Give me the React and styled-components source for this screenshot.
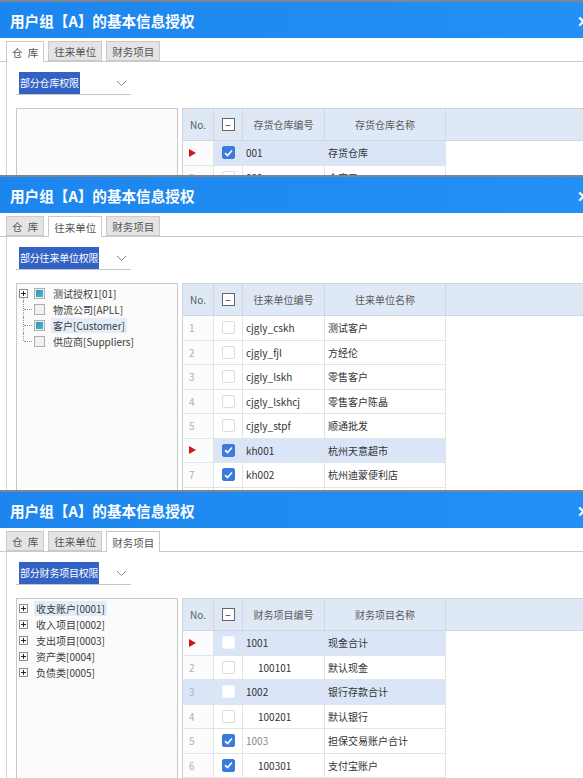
import styled, { createGlobalStyle } from "styled-components";

const GlobalStyle = createGlobalStyle`
    html, body {
        margin: 0;
        padding: 0;
        background: #ffffff;
        overflow: hidden;
    }
    body {
        font-family: "Noto Sans CJK SC", "Noto Sans", sans-serif;
        color: #333;
    }
`

const TABS = ["仓\u2002库", "往来单位", "财务项目"];

const PANELS = [
    {
        height: 175,
        tab: 0,
        filter: "部分仓库权限",
        tree: [],
        headers: ["存货仓库编号", "存货仓库名称"],
        rows: [
            { marker: true, check: "on", code: "001", name: "存货仓库", tint: true },
            { no: "2", check: "off", code: "002", name: "仓库二" },
        ],
    },
    {
        height: 315,
        tab: 1,
        filter: "部分往来单位权限",
        tree: [
            { label: "测试授权1[01]", expand: true, box: "part" },
            { label: "物流公司[APLL]", box: "empty" },
            { label: "客户[Customer]", box: "part", picked: true },
            { label: "供应商[Suppliers]", box: "empty", last: true },
        ],
        headers: ["往来单位编号", "往来单位名称"],
        rows: [
            { no: "1", check: "off", code: "cjgly_cskh", name: "测试客户" },
            { no: "2", check: "off", code: "cjgly_fjl", name: "方经伦" },
            { no: "3", check: "off", code: "cjgly_lskh", name: "零售客户" },
            { no: "4", check: "off", code: "cjgly_lskhcj", name: "零售客户陈晶" },
            { no: "5", check: "off", code: "cjgly_stpf", name: "顺通批发" },
            { marker: true, check: "on", code: "kh001", name: "杭州天意超市", tint: true },
            { no: "7", check: "on", code: "kh002", name: "杭州迪蒙便利店" },
            { no: "", check: "off", code: "", name: "" },
        ],
    },
    {
        height: 288,
        tab: 2,
        filter: "部分财务项目权限",
        tree: [
            { label: "收支账户[0001]", expand: true, picked: true },
            { label: "收入项目[0002]", expand: true },
            { label: "支出项目[0003]", expand: true },
            { label: "资产类[0004]", expand: true },
            { label: "负债类[0005]", expand: true },
        ],
        headers: ["财务项目编号", "财务项目名称"],
        rows: [
            { marker: true, check: "blank", code: "1001", name: "现金合计", tint: true },
            { no: "2", check: "off", code: "100101", name: "默认现金", indent: true },
            { no: "3", check: "blank", code: "1002", name: "银行存款合计", tint: true, tintNo: true },
            { no: "4", check: "off", code: "100201", name: "默认银行", indent: true },
            { no: "5", check: "on", code: "1003", name: "担保交易账户合计", dim: true },
            { no: "6", check: "on", code: "100301", name: "支付宝账户", indent: true },
        ],
    },
];

const Chevron = () => (
    <svg width="11" height="7" viewBox="0 0 11 7">
        <path d="M1 1 L5.5 5.5 L10 1" fill="none" stroke="#8a8a8a" strokeWidth="1" />
    </svg>
);

const Expander = () => (
    <svg width="9" height="9" viewBox="0 0 9 9">
        <rect x="0.5" y="0.5" width="8" height="8" fill="#fff" stroke="#8c8c8c" />
        <path d="M2 4.5 H7 M4.5 2 V7" stroke="#222" strokeWidth="1" />
    </svg>
);

const Marker = () => (
    <svg width="7" height="8" viewBox="0 0 7 8">
        <polygon points="0,0 7,4 0,8" fill="#d4141c" />
    </svg>
);

const Tick = () => (
    <svg width="9" height="8" viewBox="0 0 9 8">
        <path d="M1 4.2 L3.5 6.5 L8 1.5" fill="none" stroke="#fff" strokeWidth="1.6" />
    </svg>
);

const TreeNode = ({ node, index }) => (
    <TreeRow>
        <Branch $first={index === 0} $last={node.last} $lines={Boolean(node.box)}>
            {node.expand && <Expander />}
        </Branch>
        {node.box && <TreeBoxMark $part={node.box === "part"} />}
        <TreeLabel $picked={node.picked}>{node.label}</TreeLabel>
    </TreeRow>
);

const GridRow = ({ row }) => (
    <Row>
        <NoCell $tint={row.tintNo}>{row.marker ? <Marker /> : row.no}</NoCell>
        <Cell $tint={row.tint} $center>
            <CheckBox $state={row.check}>{row.check === "on" && <Tick />}</CheckBox>
        </Cell>
        <Cell $tint={row.tint} $indent={row.indent} $dim={row.dim}>{row.code}</Cell>
        <Cell $tint={row.tint}>{row.name}</Cell>
        <Filler />
    </Row>
);

const Panel = ({ panel }) => (
    <Dialog $height={panel.height}>
        <TitleBar>
            <span>用户组【A】的基本信息授权</span>
            <Close>✕</Close>
        </TitleBar>
        <TabStrip>
            {TABS.map((t, i) => (
                <Tab key={t} $active={i === panel.tab}>{t}</Tab>
            ))}
        </TabStrip>
        <Pane>
            <Dropdown>
                <DropLabel>{panel.filter}</DropLabel>
                <Chevron />
            </Dropdown>
            <Body>
                <TreeBox>
                    {panel.tree.map((node, i) => (
                        <TreeNode key={node.label} node={node} index={i} />
                    ))}
                </TreeBox>
                <Grid>
                    <HeadRow>
                        <HeadCell>No.</HeadCell>
                        <HeadCell><HeadCheck>−</HeadCheck></HeadCell>
                        <HeadCell>{panel.headers[0]}</HeadCell>
                        <HeadCell>{panel.headers[1]}</HeadCell>
                        <HeadCell />
                    </HeadRow>
                    {panel.rows.map((row, i) => (
                        <GridRow key={i} row={row} />
                    ))}
                </Grid>
            </Body>
        </Pane>
    </Dialog>
);

const App = () => (
    <>
        <GlobalStyle />
        <Page>
            {PANELS.map((p) => (
                <Panel key={p.tab} panel={p} />
            ))}
        </Page>
    </>
);

const Page = styled.div`
    width: 583px;
    height: 778px;
    overflow: hidden;
`

const Dialog = styled.section`
    width: 592px;
    height: ${(p) => p.$height}px;
    box-sizing: border-box;
    overflow: hidden;
    border-top: 2px solid #7c8591;
    background: #fff;
`

const TitleBar = styled.div`
    height: 36px;
    display: flex;
    align-items: center;
    justify-content: space-between;
    padding: 0 0 0 10px;
    background: linear-gradient(90deg, #1d86ee 0%, #2290f4 100%);
    color: #fff;
    font-size: 14.6px;
    font-weight: 700;
`

const Close = styled.span`
    font-size: 15px;
    font-weight: 700;
    padding-right: 2px;
`

const TabStrip = styled.div`
    display: flex;
    align-items: flex-end;
    gap: 4px;
    height: 20px;
    margin-top: 3px;
    padding-left: 6px;
    border-bottom: 1px solid #c9c9c9;
`

const Tab = styled.div`
    box-sizing: border-box;
    height: ${(p) => (p.$active ? "21px" : "20px")};
    margin-bottom: ${(p) => (p.$active ? "-1px" : "0")};
    padding: 0 5px;
    display: flex;
    align-items: center;
    font-size: 10.5px;
    color: #555;
    white-space: pre;
    background: ${(p) => (p.$active ? "#ffffff" : "#e4e4e4")};
    border: 1px solid #c9c9c9;
    border-bottom: ${(p) => (p.$active ? "none" : "1px solid #c9c9c9")};
`

const Pane = styled.div`
    margin-left: 6px;
    padding: 10px 0 0 9px;
    border-left: 1px solid #d4d4d4;
    height: 400px;
`

const Dropdown = styled.div`
    width: 115px;
    height: 23px;
    display: flex;
    align-items: center;
    justify-content: space-between;
    padding-right: 4px;
    box-sizing: border-box;
    border-bottom: 1px solid #c6c6c6;
`

const DropLabel = styled.span`
    margin-left: 3px;
    height: 22px;
    line-height: 22px;
    padding: 0 1px;
    background: #3262c4;
    color: #fff;
    font-size: 10px;
    letter-spacing: -0.2px;
`

const Body = styled.div`
    display: flex;
    gap: 4px;
    margin-top: 13px;
    height: 400px;
`

const TreeBox = styled.div`
    width: 160px;
    flex: none;
    padding-top: 1px;
    background: #fbfbfb;
    border: 1px solid #c8c8c8;
`

const TreeRow = styled.div`
    height: 16px;
    display: flex;
    align-items: center;
    padding-left: 1px;
`

const Branch = styled.span`
    position: relative;
    width: 15px;
    height: 16px;
    flex: none;
    display: flex;
    align-items: center;
    padding-left: 1px;
    box-sizing: border-box;

    ${(p) =>
        p.$lines &&
        !p.$first &&
        `
        &::before {
            content: "";
            position: absolute;
            left: 5px;
            top: 0;
            height: ${p.$last ? "8px" : "16px"};
            border-left: 1px dotted #9a9a9a;
        }
        &::after {
            content: "";
            position: absolute;
            left: 6px;
            top: 8px;
            width: 8px;
            border-top: 1px dotted #9a9a9a;
        }
    `}
    ${(p) =>
        p.$lines &&
        p.$first &&
        `
        &::before {
            content: "";
            position: absolute;
            left: 5px;
            top: 12px;
            height: 4px;
            border-left: 1px dotted #9a9a9a;
        }
    `}
`

const TreeBoxMark = styled.span`
    position: relative;
    width: 9px;
    height: 9px;
    margin: 0 5px 0 1px;
    flex: none;
    border: 1px solid #a9b0b6;
    background: #f1f1f1;

    ${(p) =>
        p.$part &&
        `
        &::after {
            content: "";
            position: absolute;
            inset: 1px;
            background: linear-gradient(135deg, #2d8ec4, #5ab3c9);
        }
    `}
`

const TreeLabel = styled.span`
    font-size: 10px;
    color: #3a3a3a;
    padding: 0 2px;
    line-height: 15px;
    margin-left: 1px;
    background: ${(p) => (p.$picked ? "#e3edf9" : "transparent")};
`

const Grid = styled.div`
    flex: 1;
    border-left: 1px solid #cdd3da;
    border-top: 1px solid #cdd3da;
`

const COLUMNS = "31px 29px 82px 121px 1fr";

const HeadRow = styled.div`
    display: grid;
    grid-template-columns: ${COLUMNS};
    height: 32px;
    box-sizing: border-box;
    background: #dfe9f6;
    border-bottom: 1px solid #cfd7e2;
`

const HeadCell = styled.div`
    display: flex;
    align-items: center;
    justify-content: center;
    border-right: 1px solid #cfd7e2;
    font-size: 10px;
    color: #5a5a5a;
`

const HeadCheck = styled.span`
    width: 11px;
    height: 11px;
    border: 1px solid #666;
    background: #fff;
    display: flex;
    align-items: center;
    justify-content: center;
    font-size: 10px;
    line-height: 1;
    color: #333;
`

const Row = styled.div`
    display: grid;
    grid-template-columns: ${COLUMNS};
    height: 24.5px;
`

const Cell = styled.div`
    display: flex;
    align-items: center;
    justify-content: ${(p) => (p.$center ? "center" : "flex-start")};
    padding-left: ${(p) => (p.$center ? "0" : p.$indent ? "15px" : "3px")};
    border-right: 1px solid #e1e5ea;
    border-bottom: 1px solid #e1e5ea;
    background: ${(p) => (p.$tint ? "#dae6f7" : "#fff")};
    font-size: 10px;
    color: ${(p) => (p.$dim ? "#8a8a8a" : "#333")};
    white-space: nowrap;
    overflow: hidden;
`

const NoCell = styled(Cell)`
    padding-left: 6px;
    color: #b0b0b0;
    background: ${(p) => (p.$tint ? "#dae6f7" : "#fcfcfc")};
`

const Filler = styled.div`
    background: #fff;
`

const CheckBox = styled.span`
    width: 13px;
    height: 13px;
    box-sizing: border-box;
    border-radius: 2px;
    display: flex;
    align-items: center;
    justify-content: center;
    background: ${(p) => (p.$state === "on" ? "#3b7ade" : "#fff")};
    border: 1px solid ${(p) => (p.$state === "on" ? "#3b7ade" : p.$state === "blank" ? "#f4f7fc" : "#dcdcdc")};
`

export default App;
